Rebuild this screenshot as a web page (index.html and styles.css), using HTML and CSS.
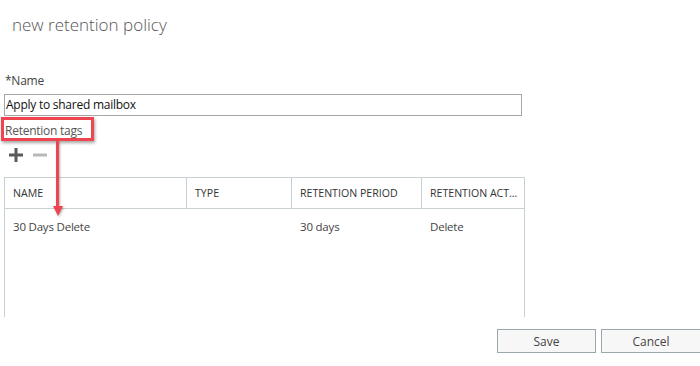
FILE: index.html
```html
<!DOCTYPE html>
<html>
<head>
<meta charset="utf-8">
<link rel="stylesheet" href="styles.css">
</head>
<body>
<div class="page">
  <h1 class="title">new retention policy</h1>
  <div class="form">
    <div class="field-label">*Name</div>
    <div class="text-input">Apply to shared mailbox</div>
    <div class="tags-label">
      <span>Retention tags</span>
      <div class="callout-box"></div>
      <div class="callout-arrow">
        <div class="arrow-line"></div>
        <div class="arrow-head"></div>
      </div>
    </div>
    <div class="toolbar">
      <svg class="icon" width="16" height="16" viewBox="0 0 16 16"><path d="M6.5 1h3v5.5H15v3H9.5V15h-3V9.5H1v-3h5.5z" fill="#5a5a5a"/></svg>
      <svg class="icon" width="16" height="16" viewBox="0 0 16 16"><rect x="1" y="6.5" width="14" height="3" fill="#b9b9b9"/></svg>
    </div>
    <div class="grid">
      <div class="grid-head">
        <div class="cell c1">NAME</div>
        <div class="cell c2">TYPE</div>
        <div class="cell c3">RETENTION PERIOD</div>
        <div class="cell c4">RETENTION ACTION</div>
      </div>
      <div class="grid-row">
        <div class="cell c1">30 Days Delete</div>
        <div class="cell c2"></div>
        <div class="cell c3">30 days</div>
        <div class="cell c4">Delete</div>
      </div>
    </div>
  </div>
  <div class="actions">
    <button class="btn save">Save</button>
    <button class="btn cancel">Cancel</button>
  </div>
</div>
</body>
</html>
```

FILE: styles.css
```css
* { box-sizing: border-box; }
html, body { margin: 0; padding: 0; background: #fff; }
body {
  font-family: "Open Sans", "Noto Sans", sans-serif;
  color: #333;
  width: 700px;
  height: 366px;
  overflow: hidden;
}
.page { position: relative; }
.title {
  margin: 0;
  padding: 12px 0 0 12px;
  height: 72px;
  font-weight: 300;
  font-size: 17px;
  line-height: 26px;
  color: #555;
}
.form { padding-left: 4px; }
.field-label {
  padding-left: 1px;
  font-size: 12px;
  letter-spacing: -0.25px;
  line-height: 18px;
  height: 22px;
  color: #444;
}
.text-input {
  width: 518px;
  height: 22px;
  border: 1px solid #a6a6a6;
  font-size: 12px;
  letter-spacing: -0.25px;
  line-height: 19px;
  padding-left: 1px;
  color: #111;
}
.tags-label {
  position: relative;
  margin-top: 6px;
  height: 25px;
  padding-left: 1px;
  font-size: 12px;
  letter-spacing: -0.25px;
  line-height: 18px;
  color: #555;
}
.callout-box {
  position: absolute;
  left: -3px;
  top: -5px;
  width: 93px;
  height: 24px;
  border: 3px solid #ef4550;
  box-shadow: 1px 2px 3px rgba(0,0,0,0.35);
}
.callout-arrow {
  position: absolute;
  left: 48px;
  top: 19px;
  width: 11px;
  height: 75px;
  display: flex;
  flex-direction: column;
  align-items: center;
  filter: drop-shadow(1px 1px 1px rgba(0,0,0,0.3));
}
.arrow-line { width: 3px; flex: 1; background: #ef4550; }
.arrow-head {
  width: 0; height: 0;
  border-left: 5.5px solid transparent;
  border-right: 5.5px solid transparent;
  border-top: 10px solid #ef4550;
}
.toolbar {
  display: flex;
  gap: 8px;
  padding-left: 4px;
  height: 30px;
  align-items: flex-start;
}
.icon { display: block; }
.grid {
  width: 521px;
  height: 140px;
  border: 1px solid #c9d0d4;
  border-bottom: none;
}
.grid-head, .grid-row { display: flex; }
.grid-head {
  height: 31px;
  border-bottom: 1px solid #c9d0d4;
}
.grid-row { height: 34px; }
.cell {
  padding: 0 8px;
  display: flex;
  align-items: center;
  white-space: nowrap;
  overflow: hidden;
}
.cell.c1 { width: 182px; }
.cell.c2 { width: 105px; }
.cell.c3 { width: 130px; }
.cell.c4 { width: 102px; }
.grid-head .cell {
  border-right: 1px solid #c9d0d4;
  color: #333;
  font-size: 10.6px;
  display: block;
  line-height: 30px;
  text-overflow: ellipsis;
}
.grid-head .cell.c4 { border-right: none; padding-right: 5px; }
.grid-row .cell {
  color: #444;
  font-size: 11.5px;
  letter-spacing: -0.2px;
}
.actions {
  display: flex;
  justify-content: flex-end;
  gap: 5px;
  margin-top: 12px;
  margin-right: -1px;
}
.btn {
  height: 24px;
  width: 99px;
  background: #f7f7f7;
  border: 1px solid #9aa8ab;
  font-family: inherit;
  font-size: 12px;
  color: #444;
  padding: 0;
}
.btn.cancel { width: 100px; }
```
